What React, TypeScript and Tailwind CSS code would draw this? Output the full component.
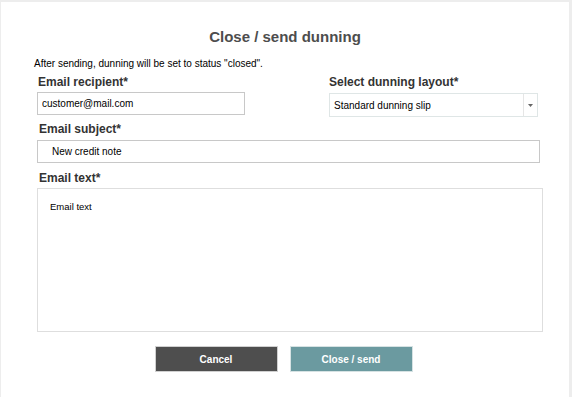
import React from 'react';

const labelCls = 'block text-[12px] font-bold text-[#333] leading-[14px]';
const inputCls =
    'w-full bg-white border border-[#c8c8c8] text-[10px] text-black focus:outline-none';

const App = () => {
    return (
        <div
            className="w-[572px] h-[397px] bg-white border-t-2 border-l border-r-[3px] border-[#ededed] overflow-hidden"
            style={{ fontFamily: '"Liberation Sans", Arial, sans-serif' }}
        >
            <h2 className="pt-[26px] text-center text-[15px] font-bold text-[#4d4d4d] leading-[18px]">
                Close / send dunning
            </h2>
            <p className="mt-[12px] ml-[33px] text-[10px] text-black leading-[12px]">
                After sending, dunning will be set to status "closed".
            </p>
            <div className="ml-[36px] mr-[29px]">
                <div className="flex justify-between mt-[5px]">
                    <div className="w-[208px]">
                        <label className={`${labelCls} ml-[1px]`}>Email recipient*</label>
                        <input
                            type="text"
                            defaultValue="customer@mail.com"
                            className={`${inputCls} mt-[3px] h-[23px] px-[4px]`}
                        />
                    </div>
                    <div className="w-[209px] mr-[2px]">
                        <label className={labelCls}>Select dunning layout*</label>
                        <div className="mt-[4px] h-[24px] flex border border-[#dfe6e6] bg-white">
                            <span className="flex-1 flex items-center px-[4px] text-[10px] text-black">
                                Standard dunning slip
                            </span>
                            <span className="w-[14px] flex items-center justify-center border-l border-[#e6e6e6]">
                                <svg width="5" height="3" viewBox="0 0 5 3">
                                    <path d="M0 0h5L2.5 3z" fill="#666" />
                                </svg>
                            </span>
                        </div>
                    </div>
                </div>
                <label className={`${labelCls} mt-[5px] ml-[2px]`}>Email subject*</label>
                <input
                    type="text"
                    defaultValue="New credit note"
                    className={`${inputCls} mt-[4px] h-[23px] px-[14px] w-[503px]`}
                />
                <label className={`${labelCls} mt-[8px] ml-[2px]`}>Email text*</label>
                <textarea
                    defaultValue="Email text"
                    className="mt-[3px] block w-[506px] h-[144px] bg-white border border-[#dedede] px-[12px] py-[11px] text-[9.5px] text-black resize-none focus:outline-none"
                />
                <div className="flex justify-center gap-[12px] mt-[14px] mr-[10px]">
                    <button className="w-[123px] h-[26px] bg-[#4e4e4e] border border-[#d0d0d0] text-white text-[10px] font-bold">
                        Cancel
                    </button>
                    <button className="w-[123px] h-[26px] bg-[#6b9aa0] border border-[#d6e2e3] text-white text-[10px] font-bold">
                        Close / send
                    </button>
                </div>
            </div>
        </div>
    );
};

export default App;
